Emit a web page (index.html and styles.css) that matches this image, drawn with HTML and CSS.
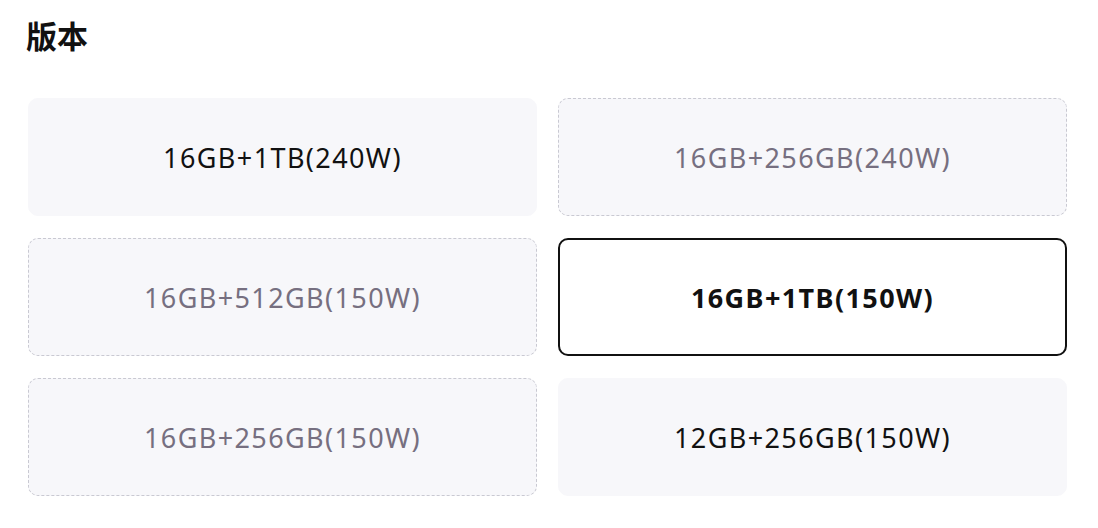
FILE: index.html
```html
<!DOCTYPE html>
<html lang="zh-CN">
<head>
  <meta charset="UTF-8" />
  <meta name="viewport" content="width=device-width, initial-scale=1.0" />
  <title>版本</title>
  <link rel="stylesheet" href="styles.css">
</head>
<body>
  <section class="version-picker">
    <h2 class="picker-title">版本</h2>

    <div class="option-grid">
      <button class="option">16GB+1TB(240W)</button>
      <button class="option sold-out">16GB+256GB(240W)</button>
      <button class="option sold-out">16GB+512GB(150W)</button>
      <button class="option selected">16GB+1TB(150W)</button>
      <button class="option sold-out">16GB+256GB(150W)</button>
      <button class="option">12GB+256GB(150W)</button>
    </div>
  </section>
</body>
</html>
```

FILE: styles.css
```css
body {
  margin: 0;
  background-color: #ffffff;
  font-family: 'Noto Sans', 'Noto Sans CJK SC', sans-serif;
  color: #111111;
}

.version-picker {
  padding: 13px 31px 0 28px;
}

.picker-title {
  margin: 0 0 41px -2px;
  font-family: 'Noto Sans CJK SC', sans-serif;
  font-size: 31px;
  line-height: 44px;
  font-weight: 700;
  color: #111111;
}

.option-grid {
  display: grid;
  grid-template-columns: 509px 509px;
  grid-auto-rows: 118px;
  gap: 22px 21px;
}

.option {
  display: flex;
  align-items: center;
  justify-content: center;
  background-color: #f7f7fa;
  border: 1px solid #f7f7fa;
  border-radius: 10px;
  font-family: inherit;
  font-size: 27px;
  letter-spacing: 1.4px;
  color: #111111;
  cursor: pointer;
}

/* greyed out, not in stock */
.option.sold-out {
  border: 1px dashed #c9c9d2;
  color: #766f80;
}

.option.selected {
  background-color: #ffffff;
  border: 2px solid #111111;
  font-weight: 700;
}
```
